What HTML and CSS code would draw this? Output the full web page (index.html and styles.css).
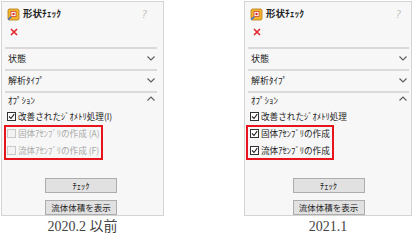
FILE: index.html
```html
<!DOCTYPE html>
<html lang="ja">
<head>
<meta charset="utf-8">
<link rel="stylesheet" href="styles.css">
</head>
<body>
<div class="page">
  <figure class="shot shot--old">
    <div class="pm">
      <div class="pm-title">
        <svg class="pm-icon" viewBox="0 0 13 13"><path d="M2 1h9l1 1v9l-1 1H2l-1-1V2z" fill="#f2b62c" stroke="#b77a18" stroke-width="0.8"/><rect x="4" y="3.5" width="5" height="5" fill="#fff" stroke="#c43" stroke-width="0.8"/><circle cx="6.5" cy="6" r="1.2" fill="#d22"/><path d="M1.2 11.8 L4.2 8.8" stroke="#3a6fd0" stroke-width="1.6"/></svg>
        <span class="pm-name">形状ﾁｪｯｸ</span>
        <span class="pm-help">?</span>
      </div>
      <div class="pm-close"><svg class="x-icon" viewBox="0 0 8 8"><path d="M1 1L7 7M7 1L1 7" stroke="#e3262b" stroke-width="1.6"/></svg></div>
      <div class="pm-sec"><span>状態</span><svg class="chev" viewBox="0 0 8 5"><polyline points="0.5,0.5 4,4 7.5,0.5" fill="none" stroke="#5c5c5c" stroke-width="1.1"/></svg></div>
      <div class="pm-sec"><span>解析ﾀｲﾌﾟ</span><svg class="chev" viewBox="0 0 8 5"><polyline points="0.5,0.5 4,4 7.5,0.5" fill="none" stroke="#5c5c5c" stroke-width="1.1"/></svg></div>
      <div class="pm-sec pm-sec--open"><span>ｵﾌﾟｼｮﾝ</span><svg class="chev" viewBox="0 0 8 5"><polyline points="0.5,4.5 4,1 7.5,4.5" fill="none" stroke="#5c5c5c" stroke-width="1.1"/></svg></div>
      <div class="cb"><span class="box"><svg viewBox="0 0 7 7"><polyline points="1,3.5 3,5.5 6.2,1.2" fill="none" stroke="#222" stroke-width="1.1"/></svg></span>改善されたｼﾞｵﾒﾄﾘ処理(I)</div>
      <div class="hl">
        <div class="cb cb--dis"><span class="box"></span>固体ｱｾﾝﾌﾞﾘの作成 (A)</div>
        <div class="cb cb--dis"><span class="box"></span>流体ｱｾﾝﾌﾞﾘの作成 (F)</div>
      </div>
      <div class="btns">
        <div class="btn">ﾁｪｯｸ</div>
        <div class="btn">流体体積を表示</div>
      </div>
    </div>
    <figcaption class="cap">2020.2 以前</figcaption>
  </figure>

  <figure class="shot shot--new">
    <div class="pm">
      <div class="pm-title">
        <svg class="pm-icon" viewBox="0 0 13 13"><path d="M2 1h9l1 1v9l-1 1H2l-1-1V2z" fill="#f2b62c" stroke="#b77a18" stroke-width="0.8"/><rect x="4" y="3.5" width="5" height="5" fill="#fff" stroke="#c43" stroke-width="0.8"/><circle cx="6.5" cy="6" r="1.2" fill="#d22"/><path d="M1.2 11.8 L4.2 8.8" stroke="#3a6fd0" stroke-width="1.6"/></svg>
        <span class="pm-name">形状ﾁｪｯｸ</span>
        <span class="pm-help">?</span>
      </div>
      <div class="pm-close"><svg class="x-icon" viewBox="0 0 8 8"><path d="M1 1L7 7M7 1L1 7" stroke="#e3262b" stroke-width="1.6"/></svg></div>
      <div class="pm-sec"><span>状態</span><svg class="chev" viewBox="0 0 8 5"><polyline points="0.5,0.5 4,4 7.5,0.5" fill="none" stroke="#5c5c5c" stroke-width="1.1"/></svg></div>
      <div class="pm-sec"><span>解析ﾀｲﾌﾟ</span><svg class="chev" viewBox="0 0 8 5"><polyline points="0.5,0.5 4,4 7.5,0.5" fill="none" stroke="#5c5c5c" stroke-width="1.1"/></svg></div>
      <div class="pm-sec pm-sec--open"><span>ｵﾌﾟｼｮﾝ</span><svg class="chev" viewBox="0 0 8 5"><polyline points="0.5,4.5 4,1 7.5,4.5" fill="none" stroke="#5c5c5c" stroke-width="1.1"/></svg></div>
      <div class="cb"><span class="box"><svg viewBox="0 0 7 7"><polyline points="1,3.5 3,5.5 6.2,1.2" fill="none" stroke="#222" stroke-width="1.1"/></svg></span>改善されたｼﾞｵﾒﾄﾘ処理</div>
      <div class="hl">
        <div class="cb"><span class="box"><svg viewBox="0 0 7 7"><polyline points="1,3.5 3,5.5 6.2,1.2" fill="none" stroke="#222" stroke-width="1.1"/></svg></span>固体ｱｾﾝﾌﾞﾘの作成</div>
        <div class="cb"><span class="box"><svg viewBox="0 0 7 7"><polyline points="1,3.5 3,5.5 6.2,1.2" fill="none" stroke="#222" stroke-width="1.1"/></svg></span>流体ｱｾﾝﾌﾞﾘの作成</div>
      </div>
      <div class="btns">
        <div class="btn">ﾁｪｯｸ</div>
        <div class="btn">流体体積を表示</div>
      </div>
    </div>
    <figcaption class="cap">2021.1</figcaption>
  </figure>
</div>
</body>
</html>
```

FILE: styles.css
```css
html, body {
  margin: 0;
  background: #ffffff;
}
body {
  font-family: "Noto Sans CJK JP", "Noto Sans", sans-serif;
  color: #222;
}
.page {
  display: flex;
  align-items: flex-start;
  gap: 80px;
  padding: 1px 0 0 1px;
}
.shot {
  margin: 0;
  display: flex;
  flex-direction: column;
}
.pm {
  box-sizing: border-box;
  width: 163px;
  height: 215px;
  border: 1px solid #d4d4d4;
  background: #f7f7f7;
  padding: 0 6px 0 3px;
  display: flex;
  flex-direction: column;
  overflow: hidden;
}
.shot--new .pm {
  width: 168px;
  padding-right: 2px;
}
.pm-title {
  height: 25px;
  display: flex;
  align-items: center;
  padding-left: 2px;
}
.pm-icon {
  width: 13px;
  height: 13px;
  margin-right: 3px;
  flex: none;
}
.pm-name {
  font-weight: bold;
  font-size: 9.5px;
  line-height: 1;
}
.pm-help {
  margin-left: auto;
  margin-right: 10px;
  color: #c2c2c2;
  font: italic 10px "DejaVu Sans", sans-serif;
}
.shot--new .pm-help {
  margin-right: 8px;
}
.pm-close {
  height: 12px;
  display: flex;
  align-items: center;
  padding-left: 5px;
  margin-bottom: 9px;
}
.x-icon {
  width: 8px;
  height: 8px;
}
.pm-sec {
  border-top: 2px solid #dadada;
  height: 20.5px;
  display: flex;
  align-items: center;
  justify-content: space-between;
  padding: 0 2px 0 3px;
  font-size: 9px;
  line-height: 1;
}
.pm-sec--open {
  height: 13px;
  align-items: flex-start;
  padding-top: 3px;
}
.chev {
  width: 8px;
  height: 5px;
}
.cb {
  height: 17px;
  display: flex;
  align-items: center;
  padding-left: 2px;
  font-size: 8.6px;
  line-height: 1;
  white-space: nowrap;
}
.box {
  box-sizing: border-box;
  width: 9px;
  height: 9px;
  border: 1px solid #333;
  background: #fff;
  margin-right: 2px;
  display: flex;
  align-items: center;
  justify-content: center;
  flex: none;
}
.box svg {
  width: 7px;
  height: 7px;
}
.cb--dis {
  color: #a9a9a9;
}
.cb--dis .box {
  border-color: #c8c8c8;
  background: #f3f3f3;
}
.hl {
  width: 99px;
  margin-left: -1px;
  padding-bottom: 1px;
  outline: 2px solid #e8141b;
  outline-offset: -2px;
}
.hl .cb {
  padding-left: 3px;
}
.shot--new .hl {
  width: 88px;
  margin-left: -2px;
}
.shot--new .hl .cb {
  padding-left: 4px;
}
.btns {
  margin-top: 18px;
  display: flex;
  flex-direction: column;
  align-items: center;
  gap: 7px;
}
.btn {
  box-sizing: border-box;
  width: 72px;
  height: 15px;
  border: 1px solid #adadad;
  background: #e1e1e1;
  display: flex;
  align-items: center;
  justify-content: center;
  font-size: 8.5px;
  line-height: 1;
}
.cap {
  text-align: center;
  font-family: "Liberation Serif", "Noto Sans CJK JP", serif;
  font-size: 14px;
  line-height: 22px;
  color: #444;
}
```
